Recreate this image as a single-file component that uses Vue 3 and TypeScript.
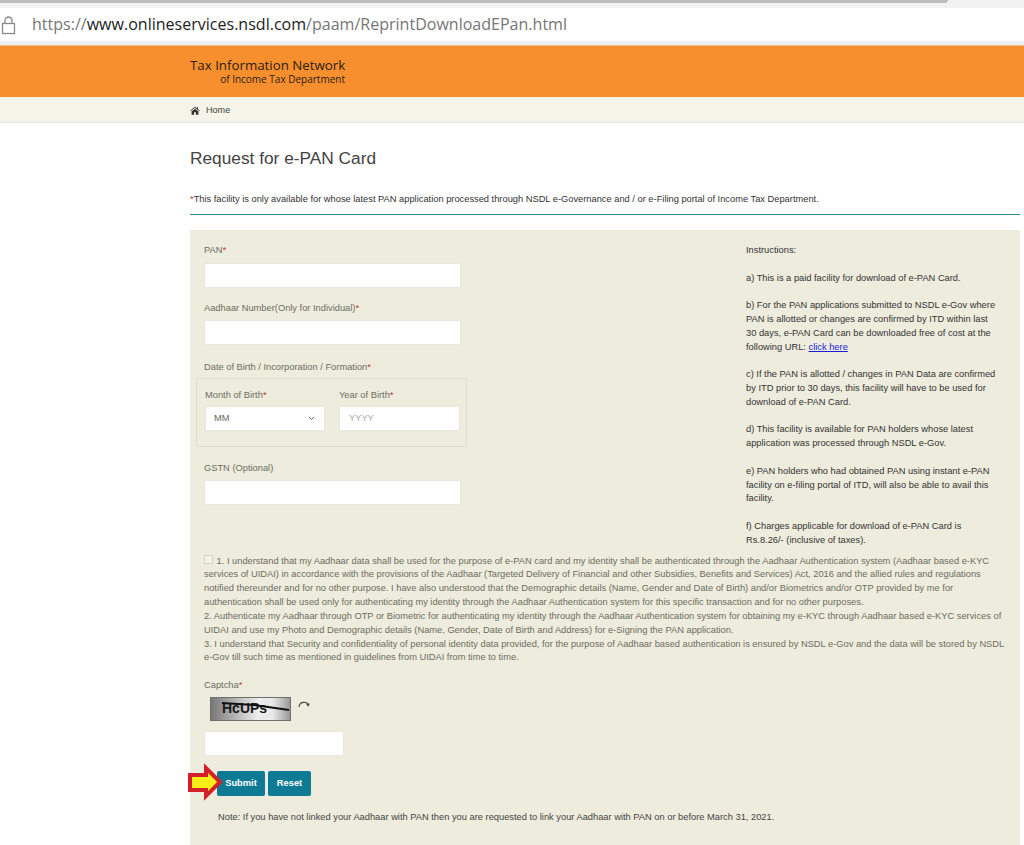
<script setup lang="ts">
const title: string = 'Request for e-PAN Card'
</script>

<template>
  <div class="page">
    <div class="tabstrip"><div class="tabbar"></div></div>
    <div class="addressbar">
      <svg class="lock" width="16" height="20" viewBox="0 0 16 20" fill="none" stroke="#8a8a8a" stroke-width="1.3">
        <rect x="1.5" y="8.5" width="12" height="10" />
        <path d="M4 8.5V5.5a3.5 3.5 0 0 1 7 0v3" />
      </svg>
      <span class="url"><span class="dim">https://</span>www.onlineservices.nsdl.com<span class="dim">/paam/ReprintDownloadEPan.html</span></span>
    </div>
    <header class="banner">
      <div class="logo">
        <div class="logo-main">Tax Information Network</div>
        <div class="logo-sub">of Income Tax Department</div>
      </div>
    </header>
    <nav class="crumb">
      <svg width="10" height="9" viewBox="0 0 12 10" fill="#333">
        <path d="M6 0.4 0.2 5.2l.6.8L6 1.8 11.2 6l.6-.8L9.6 3.4V1H8.2v1.2z" />
        <path d="M6 2.8 1.9 6.2V10h3V7.2h2.2V10h3V6.2z" />
      </svg>
      <span>Home</span>
    </nav>

    <main class="content">
      <h1>{{ title }}</h1>
      <p class="facility"><span class="req">*</span>This facility is only available for whose latest PAN application processed through NSDL e-Governance and / or e-Filing portal of Income Tax Department.</p>
      <div class="rule"></div>

      <section class="panel">
        <div class="columns">
          <div class="form">
            <label class="lab lab-first">PAN<span class="req">*</span></label>
            <div class="input wide"></div>

            <label class="lab lab-aadhaar">Aadhaar Number(Only for Individual)<span class="req">*</span></label>
            <div class="input wide"></div>

            <label class="lab lab-dob">Date of Birth / Incorporation / Formation<span class="req">*</span></label>
            <div class="dob">
              <div class="dob-col">
                <label class="lab">Month of Birth<span class="req">*</span></label>
                <div class="input month">
                  <span>MM</span>
                  <svg width="7" height="5" viewBox="0 0 7 5" fill="none" stroke="#666" stroke-width="1"><path d="M1 1l2.5 2.5L6 1" /></svg>
                </div>
              </div>
              <div class="dob-col">
                <label class="lab">Year of Birth<span class="req">*</span></label>
                <div class="input year">YYYY</div>
              </div>
            </div>

            <label class="lab lab-gstn">GSTN (Optional)</label>
            <div class="input wide"></div>
          </div>

          <aside class="instructions">
            <p>Instructions:</p>
            <p>a) This is a paid facility for download of e-PAN Card.</p>
            <p>b) For the PAN applications submitted to NSDL e-Gov where<br />PAN is allotted or changes are confirmed by ITD within last<br />30 days, e-PAN Card can be downloaded free of cost at the<br />following URL: <a href="#">click here</a></p>
            <p>c) If the PAN is allotted / changes in PAN Data are confirmed<br />by ITD prior to 30 days, this facility will have to be used for<br />download of e-PAN Card.</p>
            <p>d) This facility is available for PAN holders whose latest<br />application was processed through NSDL e-Gov.</p>
            <p>e) PAN holders who had obtained PAN using instant e-PAN<br />facility on e-filing portal of ITD, will also be able to avail this<br />facility.</p>
            <p>f) Charges applicable for download of e-PAN Card is<br />Rs.8.26/- (inclusive of taxes).</p>
          </aside>
        </div>

        <div class="consent">
          <span class="check"></span> 1. I understand that my Aadhaar data shall be used for the purpose of e-PAN card and my identity shall be authenticated through the Aadhaar Authentication system (Aadhaar based e-KYC<br />
          services of UIDAI) in accordance with the provisions of the Aadhaar (Targeted Delivery of Financial and other Subsidies, Benefits and Services) Act, 2016 and the allied rules and regulations<br />
          notified thereunder and for no other purpose. I have also understood that the Demographic details (Name, Gender and Date of Birth) and/or Biometrics and/or OTP provided by me for<br />
          authentication shall be used only for authenticating my identity through the Aadhaar Authentication system for this specific transaction and for no other purposes.<br />
          2. Authenticate my Aadhaar through OTP or Biometric for authenticating my identity through the Aadhaar Authentication system for obtaining my e-KYC through Aadhaar based e-KYC services of<br />
          UIDAI and use my Photo and Demographic details (Name, Gender, Date of Birth and Address) for e-Signing the PAN application.<br />
          3. I understand that Security and confidentiality of personal identity data provided, for the purpose of Aadhaar based authentication is ensured by NSDL e-Gov and the data will be stored by NSDL<br />
          e-Gov till such time as mentioned in guidelines from UIDAI from time to time.
        </div>

        <label class="lab lab-captcha">Captcha<span class="req">*</span></label>
        <div class="captcha-row">
          <div class="captcha">
            <span class="captcha-text">HcUPs</span>
            <svg class="captcha-line" width="81" height="24" viewBox="0 0 81 24" fill="none" stroke="#111" stroke-width="1.8"><path d="M12 6 L44 8 L79 13" /></svg>
          </div>
          <svg class="refresh" width="14" height="14" viewBox="0 0 14 14" fill="none" stroke="#444" stroke-width="1.1">
            <path d="M2 9a5 5 0 0 1 9.6-1.6" />
            <path d="M12.8 5.2 11.7 8.4 9 6.6" fill="#444" stroke="none" />
          </svg>
        </div>
        <div class="input captcha-input"></div>

        <div class="actions">
          <svg class="arrow" width="37" height="40" viewBox="0 0 37 40">
            <path d="M3 13H19V6L33 20 19 34V28H3z" fill="#f7ee1a" stroke="#d3202a" stroke-width="4" stroke-linejoin="miter" />
          </svg>
          <button type="button" class="btn btn-submit">Submit</button>
          <button type="button" class="btn btn-reset">Reset</button>
        </div>

        <p class="note">Note: If you have not linked your Aadhaar with PAN then you are requested to link your Aadhaar with PAN on or before March 31, 2021.</p>
      </section>
    </main>
  </div>
</template>

<style>
html, body { margin: 0; background: #fff; }
</style>

<style scoped>
.page {
  height: 845px;
  overflow: hidden;
  font-family: "Liberation Sans", Arial, sans-serif;
  font-size: 9.3px;
  line-height: 13.85px;
  color: #333;
  background: #fff;
}
.tabstrip { height: 8px; background: #f2f2f2; }
.tabbar { width: 948px; height: 3px; background: #bdbdbd; border-bottom-right-radius: 3px; }
.addressbar {
  height: 33px;
  display: flex;
  align-items: center;
  background: #fff;
  border-bottom: 4px solid #f0f0f0;
  padding-left: 1px;
}
.lock { margin-right: 15px; }
.url {
  font-family: "Open Sans", "Noto Sans", sans-serif;
  font-size: 16.05px;
  color: #222;
}
.dim { color: #767676; }
.banner {
  height: 52px;
  background: #f78f2e;
  border-top: 1px solid #e8c08e;
  box-sizing: border-box;
  padding: 11px 0 0 190px;
}
.logo { width: 155px; color: #2a2018; font-family: "Open Sans", "Noto Sans", sans-serif; }
.logo-main { font-size: 13.3px; line-height: 16px; white-space: nowrap; }
.logo-sub { font-size: 10px; line-height: 13px; text-align: right; white-space: nowrap; }
.crumb {
  height: 24px;
  padding-top: 1px;
  background: #f5f4e9;
  border-bottom: 1px solid #e6e6e6;
  display: flex;
  align-items: center;
  gap: 6px;
  padding-left: 190px;
  color: #444;
}
.crumb span { font-size: 9.1px; line-height: 14px; }
.content { padding: 0 4px 0 190px; }
h1 {
  margin: 0;
  padding-top: 25px;
  font-size: 17.3px;
  line-height: 20px;
  font-weight: 400;
  color: #444;
}
.facility { margin: 0; padding-top: 24px; line-height: 14px; color: #333; white-space: nowrap; }
.rule { height: 1px; margin-top: 8px; background: #2f8a94; }
.panel {
  margin-top: 15px;
  height: 620px;
  box-sizing: border-box;
  background: #eeecdd;
  padding: 13px 14px 0;
  position: relative;
}
.columns { display: grid; grid-template-columns: 542px 1fr; }
.lab { display: block; color: #6c6c62; line-height: 14px; white-space: nowrap; }
.req { color: #c0392b; }
.input {
  height: 25px;
  box-sizing: border-box;
  background: #fff;
  border-radius: 2px;
  border: 1px solid #e8e7dc;
}
.wide { width: 257px; }
.lab-first { margin-bottom: 6px; }
.lab-aadhaar { margin-top: 13px; margin-bottom: 5px; }
.lab-dob { margin-top: 15px; margin-bottom: 4px; }
.lab-gstn { margin-top: 14px; margin-bottom: 5px; }
.dob {
  width: 271px;
  height: 69px;
  box-sizing: border-box;
  margin-left: -8px;
  border: 1px solid #e0decd;
  padding: 9px 0 0 8px;
  display: flex;
  gap: 14px;
}
.dob-col .lab { margin-bottom: 4px; }
.month {
  width: 120px;
  display: flex;
  align-items: center;
  justify-content: space-between;
  padding: 0 9px 0 8px;
  color: #666;
}
.year {
  width: 121px;
  display: flex;
  align-items: center;
  padding-left: 9px;
  color: #aaa;
}
.instructions { color: #333; margin-top: 1px; line-height: 13.8px; }
.instructions p { margin: 0 0 13.8px; white-space: nowrap; }
.instructions p:last-child { margin-bottom: 0; }
.instructions a { color: #1a1ad6; text-decoration: underline; }
.consent { margin-top: 7px; color: #6c6c62; white-space: nowrap; }
.check {
  display: inline-block;
  width: 7px;
  height: 7px;
  border: 1px solid #d4d3c8;
  background: #f4f3ea;
  vertical-align: -0.5px;
  margin-right: 1px;
}
.lab-captcha { margin-top: 13px; margin-bottom: 5px; }
.captcha-row { display: flex; align-items: flex-start; margin-left: 6px; gap: 6px; }
.captcha {
  width: 81px;
  height: 24px;
  box-sizing: border-box;
  border: 1px solid #6e6e6e;
  background: linear-gradient(90deg, #777 0%, #aaa 25%, #eee 60%, #e8e8e8 78%, #999 100%);
  position: relative;
  overflow: hidden;
  display: flex;
  align-items: center;
  padding-left: 11px;
}
.captcha-text { font-size: 14px; font-weight: 700; color: #1a1a1a; }
.captcha-line { position: absolute; left: -1px; top: -1px; }
.refresh { margin-top: 1px; }
.captcha-input { width: 140px; margin-top: 10px; }
.actions {
  position: relative;
  margin-top: 15px;
  margin-left: 13px;
  display: flex;
  gap: 3px;
}
.arrow { position: absolute; left: -30px; top: -9px; z-index: 1; }
.btn {
  height: 25px;
  padding: 0;
  border: 0;
  border-radius: 2px;
  background: #0f7a93;
  color: #fff;
  font: 700 9.3px/25px "Liberation Sans", Arial, sans-serif;
}
.btn-submit { width: 48px; }
.btn-reset { width: 43px; }
.note { margin: 15px 0 0 14px; color: #444; white-space: nowrap; }
</style>
